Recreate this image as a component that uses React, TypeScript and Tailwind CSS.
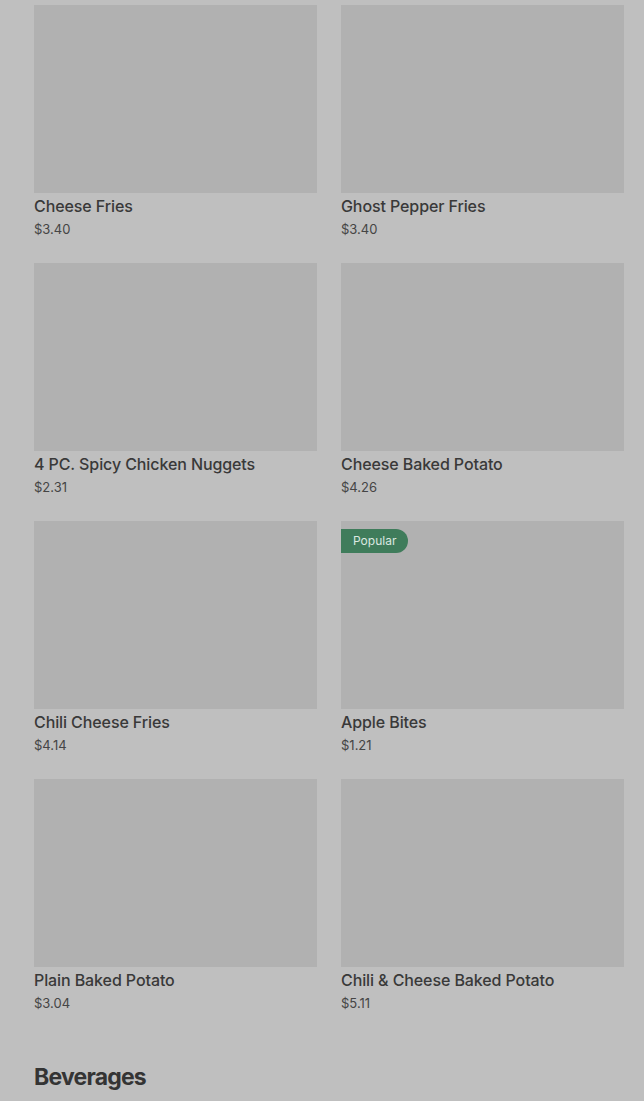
const items = [
  { name: "Cheese Fries", price: "$3.40" },
  { name: "Ghost Pepper Fries", price: "$3.40" },
  { name: "4 PC. Spicy Chicken Nuggets", price: "$2.31" },
  { name: "Cheese Baked Potato", price: "$4.26" },
  { name: "Chili Cheese Fries", price: "$4.14" },
  { name: "Apple Bites", price: "$1.21", popular: true },
  { name: "Plain Baked Potato", price: "$3.04" },
  { name: "Chili & Cheese Baked Potato", price: "$5.11" },
];

function ItemCard({ name, price, popular }: { name: string; price: string; popular?: boolean }) {
  return (
    <div className="flex flex-col">
      <div className="relative h-[188px] bg-[#b1b1b1]">
        {popular && (
          <span className="absolute left-0 top-[8px] h-[24px] px-3 flex items-center rounded-r-full bg-[#3f7c5b] text-[12px] text-[#dbe8e0]">
            Popular
          </span>
        )}
      </div>
      <div className="pt-[1px] text-[16px] leading-[24px] font-medium tracking-[-0.1px] text-[#393939]">{name}</div>
      <div className="pt-[1px] text-[13px] leading-[20px] text-[#454545]">{price}</div>
    </div>
  );
}

export default function App() {
  return (
    <div
      className="min-h-[1101px] bg-[#bfbfbf] pl-[34px] pr-[20px] pt-[5px]"
      style={{ fontFamily: "Inter, Roboto, 'Liberation Sans', sans-serif" }}
    >
      <div className="grid grid-cols-2 gap-x-[24px] gap-y-[24px]">
        {items.map((it) => (
          <ItemCard key={it.name} {...it} />
        ))}
      </div>
      <h2 className="mt-[48px] h-[32px] text-[23px] leading-[32px] font-bold tracking-[-0.8px] text-[#343434]">
        Beverages
      </h2>
    </div>
  );
}
